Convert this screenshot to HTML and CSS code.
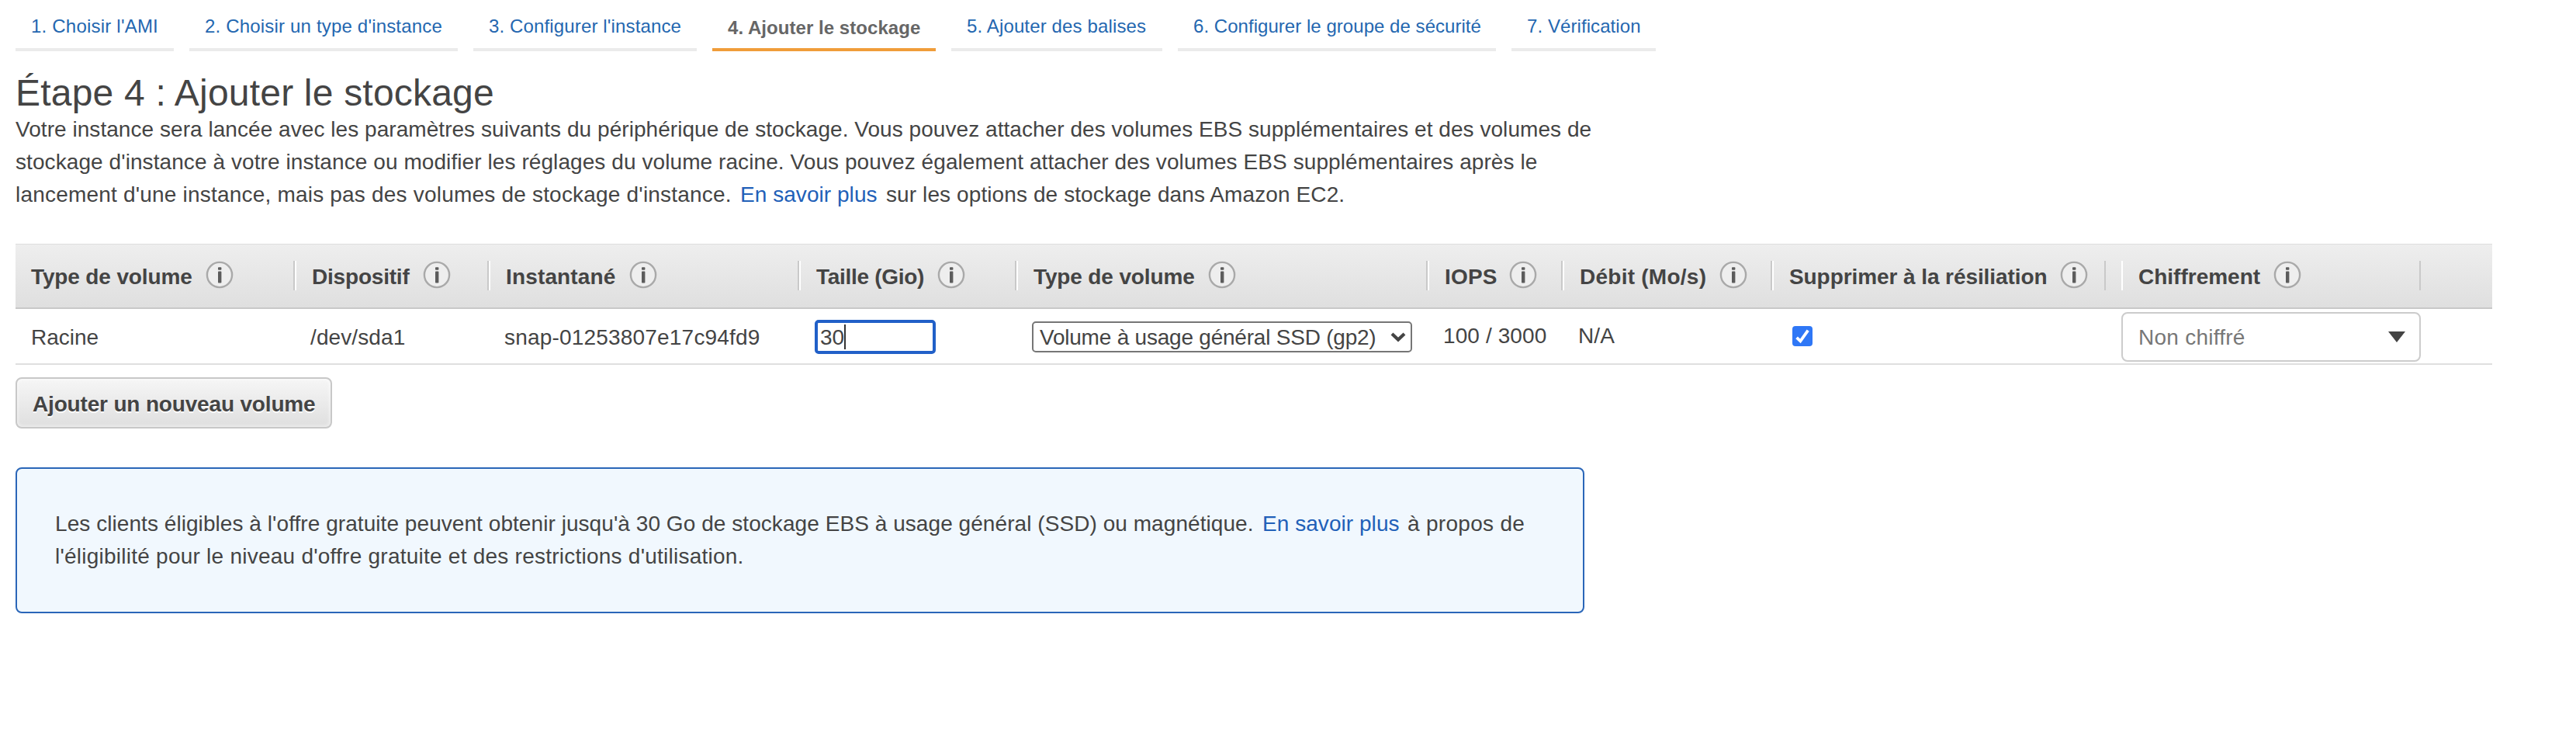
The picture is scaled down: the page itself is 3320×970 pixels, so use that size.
FILE: index.html
```html
<!DOCTYPE html>
<html lang="fr">
<head>
<meta charset="utf-8">
<title>Étape 4 : Ajouter le stockage</title>
<link rel="stylesheet" href="styles.css">
</head>
<body>
<svg class="sprite" aria-hidden="true">
  <symbol id="info" viewBox="0 0 36 36">
    <circle cx="18" cy="18" r="16.1" fill="#eee" stroke="#a9a9a9" stroke-width="2.4"/>
    <rect x="16" y="8.2" width="4.4" height="3.6" rx="0.8" fill="#5c5c5c"/>
    <rect x="16" y="13.6" width="4.4" height="15" rx="0.8" fill="#5c5c5c"/>
  </symbol>
</svg>

<nav class="steps">
  <a class="step step-1">1. Choisir l'AMI</a>
  <a class="step step-2">2. Choisir un type d'instance</a>
  <a class="step step-3">3. Configurer l'instance</a>
  <a class="step step-4 active">4. Ajouter le stockage</a>
  <a class="step step-5">5. Ajouter des balises</a>
  <a class="step step-6">6. Configurer le groupe de sécurité</a>
  <a class="step step-7">7. Vérification</a>
</nav>

<main>
  <h1 class="title">Étape 4 : Ajouter le stockage</h1>
  <p class="intro">
    <span class="line intro-1">Votre instance sera lancée avec les paramètres suivants du périphérique de stockage. Vous pouvez attacher des volumes EBS supplémentaires et des volumes de</span>
    <span class="line intro-2">stockage d'instance à votre instance ou modifier les réglages du volume racine. Vous pouvez également attacher des volumes EBS supplémentaires après le</span>
    <span class="line intro-3"><span class="before-link">lancement d'une instance, mais pas des volumes de stockage d'instance.</span><a class="link">En savoir plus</a><span class="after-link">sur les options de stockage dans Amazon EC2.</span></span>
  </p>

  <section class="volumes">
    <div class="grid head">
      <div class="th th-first"><span class="label type">Type de volume</span><svg class="info"><use href="#info"/></svg></div>
      <div class="th"><span class="label device">Dispositif</span><svg class="info"><use href="#info"/></svg></div>
      <div class="th"><span class="label snapshot">Instantané</span><svg class="info"><use href="#info"/></svg></div>
      <div class="th"><span class="label size">Taille (Gio)</span><svg class="info"><use href="#info"/></svg></div>
      <div class="th"><span class="label type">Type de volume</span><svg class="info"><use href="#info"/></svg></div>
      <div class="th"><span class="label iops">IOPS</span><svg class="info"><use href="#info"/></svg></div>
      <div class="th"><span class="label rate">Débit (Mo/s)</span><svg class="info"><use href="#info"/></svg></div>
      <div class="th th-delete"><span class="label delete">Supprimer à la résiliation</span><svg class="info"><use href="#info"/></svg></div>
      <div class="th"><span class="label">Chiffrement</span><svg class="info"><use href="#info"/></svg></div>
    </div>
    <div class="grid row">
      <div class="td td-first">Racine</div>
      <div class="td td-device">/dev/sda1</div>
      <div class="td td-snapshot">snap-01253807e17c94fd9</div>
      <div class="td"><div class="size-field"><span>30</span><i class="caret"></i></div></div>
      <div class="td"><div class="select"><span>Volume à usage général SSD (gp2)</span><svg class="chevron" viewBox="0 0 20 14"><path d="M2 3 10 10.5 18 3" fill="none" stroke="#444" stroke-width="4.2"/></svg></div></div>
      <div class="td td-raised">100 / 3000</div>
      <div class="td td-raised td-rate">N/A</div>
      <div class="td td-check"><svg class="checkbox" viewBox="0 0 26 26"><rect width="26" height="26" rx="4" fill="#2f77f6"/><path d="M5.6 14.8 10.4 19.4 20.2 5.6" fill="none" stroke="#fff" stroke-width="3.8"/></svg></div>
      <div class="td td-cipher"><div class="dropdown"><span>Non chiffré</span><svg class="arrow" viewBox="0 0 22 14"><path d="M0 0H22L11 14Z" fill="#444"/></svg></div></div>
    </div>
  </section>

  <button class="add">Ajouter un nouveau volume</button>

  <aside class="notice">
    <span class="line notice-1"><span class="before-link">Les clients éligibles à l'offre gratuite peuvent obtenir jusqu'à 30 Go de stockage EBS à usage général (SSD) ou magnétique.</span><a class="link">En savoir plus</a><span class="after-link">à propos de</span></span>
    <span class="line notice-2">l'éligibilité pour le niveau d'offre gratuite et des restrictions d'utilisation.</span>
  </aside>
</main>
</body>
</html>
```

FILE: styles.css
```css
* { box-sizing: border-box; }

body {
  margin: 0;
  padding: 0 20px;
  background: #fff;
  color: #444;
  font: 28px/42px "Liberation Sans", Arial, sans-serif;
}

.sprite { position: absolute; width: 0; height: 0; }

/* Wizard steps */
.steps { display: flex; gap: 20px; height: 66px; }
.step {
  padding: 16px 0 0 20px;
  border-bottom: 4px solid #ebebeb;
  color: #2467b0;
  font-size: 24px;
  line-height: 36px;
  white-space: nowrap;
}
.step.active {
  padding-top: 18px;
  border-color: #f09d3a;
  color: #666;
  font-weight: bold;
}
.step-1 { width: 204px; letter-spacing: 0.21px; }
.step-2 { width: 346px; letter-spacing: 0.18px; }
.step-3 { width: 288px; letter-spacing: 0.14px; }
.step-4 { width: 288px; letter-spacing: 0.05px; }
.step-5 { width: 272px; letter-spacing: 0.14px; }
.step-6 { width: 410px; letter-spacing: 0.04px; }
.step-7 { width: 186px; letter-spacing: 0.08px; }

/* Heading and introduction */
.title {
  margin: 27px 0 0;
  font-size: 48px;
  font-weight: normal;
  line-height: 53px;
  letter-spacing: 0.2px;
}
.intro { margin: 0; }
.line { display: flex; height: 42px; white-space: nowrap; }
.link { color: #2160b8; letter-spacing: 0.05px; }
.intro-1 { letter-spacing: 0.05px; }
.intro-2 { letter-spacing: 0.08px; }
.intro-3 .before-link { width: 934px; letter-spacing: 0.2px; }
.intro-3 .link { width: 188px; }
.intro-3 .after-link { letter-spacing: 0.1px; }

/* Volume table */
.volumes { width: 3192px; margin-top: 42px; }
.grid {
  display: grid;
  grid-template-columns: 360px 250px 400px 280px 530px 174px 270px 450px 386px;
}
.head {
  height: 84px;
  padding-top: 21px;
  border-top: 1px solid #ddd;
  border-bottom: 2px solid #c8c8c8;
  background: linear-gradient(#eee, #dfdfdf);
}
.th {
  display: flex;
  height: 38px;
  padding-left: 20px;
  border-left: 2px solid #fff;
  border-right: 2px solid #c9c9c9;
  font-weight: bold;
  line-height: 41px;
  white-space: nowrap;
}
.th-first { border-left: 0; }
.th-delete { margin-right: 20px; }
.info { flex: none; width: 36px; height: 36px; margin-left: 17px; }
.type { letter-spacing: -0.14px; }
.device { letter-spacing: -0.2px; }
.snapshot { letter-spacing: 0.15px; }
.size { letter-spacing: -0.3px; }
.iops { letter-spacing: 0.2px; }
.iops + .info { margin-left: 15px; }
.rate { letter-spacing: 0.25px; }
.delete { letter-spacing: -0.08px; }

.row { height: 72px; border-bottom: 2px solid #dfdfdf; }
.td { padding-left: 20px; line-height: 73px; white-space: nowrap; }
.td-device { letter-spacing: 0.1px; }
.td-snapshot { letter-spacing: 0.19px; }
.td-raised { line-height: 69px; letter-spacing: 0.1px; }

.size-field {
  display: flex;
  align-items: flex-start;
  width: 156px;
  height: 44px;
  margin-top: 14px;
  padding-left: 3px;
  border: 4px solid #2160c8;
  border-radius: 5px;
  line-height: 37px;
}
.caret { width: 2px; height: 32px; margin-top: 2px; background: #333; }

.select {
  display: flex;
  justify-content: space-between;
  width: 490px;
  height: 40px;
  margin-top: 16px;
  padding: 0 6px 0 8px;
  border: 2px solid #767676;
  border-radius: 5px;
  line-height: 37px;
  letter-spacing: -0.22px;
}
.chevron { width: 20px; height: 14px; margin-top: 11px; }

.td-check { padding: 22px 0 0 26px; line-height: 0; }
.checkbox { width: 26px; height: 26px; }

.td-cipher { padding-left: 0; }
.dropdown {
  display: flex;
  justify-content: space-between;
  width: 386px;
  height: 64px;
  margin-top: 4px;
  padding: 0 18px 0 20px;
  border: 2px solid #ccc;
  border-radius: 8px;
  color: #777;
  line-height: 61px;
  letter-spacing: 0.25px;
}
.arrow { width: 22px; height: 14px; margin-top: 23px; }

/* Add button */
.add {
  display: block;
  width: 408px;
  height: 66px;
  margin: 16px 0 0;
  padding: 3px 0 0 20px;
  border: 2px solid #c8c8c8;
  border-radius: 8px;
  background: linear-gradient(#f6f6f6, #dfdfdf);
  box-shadow: inset 0 0 4px 1px rgba(255, 255, 255, 0.6);
  color: #444;
  font: bold 28px/59px "Liberation Sans", Arial, sans-serif;
  letter-spacing: -0.17px;
  text-align: left;
  text-shadow: 0 2px 0 #fff;
  white-space: nowrap;
}

/* Free tier notice */
.notice {
  width: 2022px;
  height: 188px;
  margin-top: 50px;
  padding: 50px 0 0 49px;
  border: 2px solid #2a66b8;
  border-radius: 8px;
  background: #f1f8fe;
}
.notice-1 .before-link { width: 1556px; letter-spacing: 0.06px; }
.notice-1 .link { width: 187px; }
.notice-1 .after-link { letter-spacing: 0.3px; }
.notice-2 { letter-spacing: 0.24px; }
```
